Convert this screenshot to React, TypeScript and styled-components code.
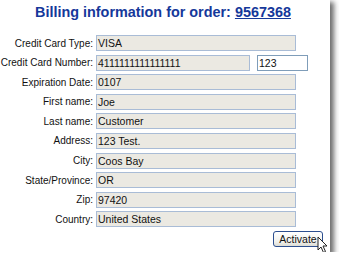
import React from 'react'
import styled, { createGlobalStyle } from 'styled-components'

const GlobalStyle = createGlobalStyle`
  html, body {
    margin: 0;
    padding: 0;
    background: #ffffff;
  }
  body {
    font-family: "Liberation Sans", Arial, sans-serif;
  }
`

const Window = styled.div`
  position: relative;
  width: 330px;
  height: 252px;
  background: #ffffff;
  box-shadow: 3px 3px 5px 1px rgba(60, 60, 60, 0.75);
  box-sizing: border-box;
  padding-top: 4px;
`

const Title = styled.h1`
  margin: 0;
  height: 31px;
  font-size: 14.4px;
  font-weight: bold;
  color: #15389a;
  text-align: center;
  line-height: 17px;
  padding-right: 4px;
`

const OrderLink = styled.a`
  color: #15389a;
  text-decoration: underline;
`

const Form = styled.div`
  display: grid;
  grid-template-columns: 93px auto;
  column-gap: 3px;
  row-gap: 3.6px;
  grid-auto-rows: 16px;
`

const Label = styled.label`
  font-size: 10px;
  color: #111;
  text-align: right;
  align-self: center;
  white-space: nowrap;
`

const Line = styled.div`
  display: flex;
  gap: 7px;
`

const Field = styled.div<{ $width?: number; $editable?: boolean }>`
  box-sizing: border-box;
  width: ${(p) => p.$width ?? 200}px;
  height: 16px;
  border: 1px solid ${(p) => (p.$editable ? '#7f9db9' : '#a9bcd6')};
  background: ${(p) => (p.$editable ? '#ffffff' : '#ebe9e2')};
  font-size: 10.5px;
  line-height: 14px;
  padding-left: 1px;
  color: #111;
  white-space: nowrap;
  overflow: hidden;
`

const Actions = styled.div`
  display: flex;
  justify-content: flex-end;
  padding: 4px 7px 0 0;
`

const Button = styled.button`
  box-sizing: border-box;
  width: 50px;
  height: 16px;
  padding: 0;
  font-family: "Liberation Sans", Arial, sans-serif;
  font-size: 10.5px;
  color: #111;
  border: 1px solid #2d4f8f;
  border-radius: 3px;
  background: linear-gradient(#ffffff, #f1f1ec 70%, #dcdcd4);
`

const Pointer = styled.svg`
  position: absolute;
  left: 317px;
  top: 236px;
`

const rows: [string, string][] = [
  ['Expiration Date:', '0107'],
  ['First name:', 'Joe'],
  ['Last name:', 'Customer'],
  ['Address:', '123 Test.'],
  ['City:', 'Coos Bay'],
  ['State/Province:', 'OR'],
  ['Zip:', '97420'],
  ['Country:', 'United States'],
]

export default function App() {
  return (
    <>
      <GlobalStyle />
      <Window>
        <Title>
          Billing information for order: <OrderLink href="#">9567368</OrderLink>
        </Title>
        <Form>
          <Label>Credit Card Type:</Label>
          <Field>VISA</Field>
          <Label>Credit Card Number:</Label>
          <Line>
            <Field $width={154}>4111111111111111</Field>
            <Field $width={51} $editable>123</Field>
          </Line>
          {rows.map(([label, value]) => (
            <React.Fragment key={label}>
              <Label>{label}</Label>
              <Field>{value}</Field>
            </React.Fragment>
          ))}
        </Form>
        <Actions>
          <Button>Activate</Button>
        </Actions>
        <Pointer width="12" height="18" viewBox="0 0 12 18">
          <path
            d="M1 1 L1 14 L4 11 L6.5 16.5 L8.5 15.5 L6 10 L10 10 Z"
            fill="#ffffff"
            stroke="#222"
            strokeWidth="1"
            strokeLinejoin="round"
          />
        </Pointer>
      </Window>
    </>
  )
}
